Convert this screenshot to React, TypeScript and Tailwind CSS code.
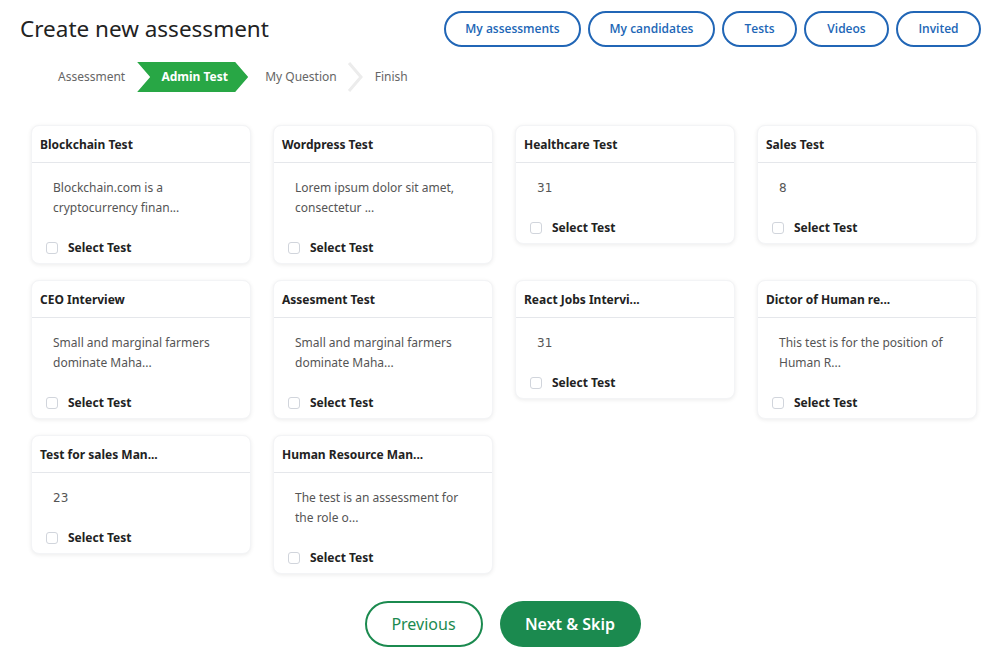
import { useState } from "react";

type Test = { title: string; body: string; numeric?: boolean };

const tests: Test[] = [
  { title: "Blockchain Test", body: "Blockchain.com is a cryptocurrency finan..." },
  { title: "Wordpress Test", body: "Lorem ipsum dolor sit amet, consectetur ..." },
  { title: "Healthcare Test", body: "31", numeric: true },
  { title: "Sales Test", body: "8", numeric: true },
  { title: "CEO Interview", body: "Small and marginal farmers dominate Maha..." },
  { title: "Assesment Test", body: "Small and marginal farmers dominate Maha..." },
  { title: "React Jobs Intervi...", body: "31", numeric: true },
  { title: "Dictor of Human re...", body: "This test is for the position of Human R..." },
  { title: "Test for sales Man...", body: "23", numeric: true },
  { title: "Human Resource Man...", body: "The test is an assessment for the role o..." },
];

const navLinks = [
  { label: "My assessments", width: "w-[137px]" },
  { label: "My candidates", width: "w-[127px]" },
  { label: "Tests", width: "w-[75px]" },
  { label: "Videos", width: "w-[85px]" },
  { label: "Invited", width: "w-[85px]" },
];

function TestCard({ test }: { test: Test }) {
  const [checked, setChecked] = useState(false);
  return (
    <div className="rounded-lg border border-gray-100 bg-white shadow-[0_1px_4px_rgba(0,0,0,0.08)]">
      <div className="flex h-[37px] items-center border-b border-gray-200 px-2 pt-[2px] text-[12px] font-bold text-[#222]">
        {test.title}
      </div>
      <div className="pl-[21px] pr-6 pt-[15px] text-[12px] leading-5 text-[#555]">
        {test.numeric ? (
          <span className="font-['DejaVu_Sans',sans-serif] text-[12px] text-[#555]">{test.body}</span>
        ) : (
          <p>{test.body}</p>
        )}
      </div>
      <label className="flex cursor-pointer items-center gap-[10px] px-[14px] pb-[6px] pt-[21px]">
        <input
          type="checkbox"
          checked={checked}
          onChange={() => setChecked(!checked)}
          className="h-3 w-3 appearance-none rounded-[3px] border border-gray-300 bg-white checked:bg-[#27a24c]"
        />
        <span className="text-[12px] font-bold text-[#222]">Select Test</span>
      </label>
    </div>
  );
}

export default function App() {
  return (
    <div className="min-h-[669px] w-[1000px] bg-white font-['Noto_Sans',sans-serif]">
      <header className="flex items-start justify-between pl-5 pr-[19px] pt-[11px]">
        <h1 className="mt-[2px] text-[22.5px] leading-8 text-[#222]">Create new assessment</h1>
        <nav className="flex gap-[7px]">
          {navLinks.map((l) => (
            <button
              key={l.label}
              className={`h-9 rounded-full border-2 border-[#2166b6] font-['Open_Sans',sans-serif] text-[12px] font-semibold text-[#2166b6] ${l.width}`}
            >
              {l.label}
            </button>
          ))}
        </nav>
      </header>

      <div className="ml-[58px] mt-[15px] flex h-[30px] items-center text-[12px]">
        <span className="text-[#666]">Assessment</span>
        <div className="ml-[12px] flex h-[30px] w-[111px] items-center justify-center bg-[#28a745] pl-1 font-bold text-white [clip-path:polygon(0_0,calc(100%-13px)_0,100%_50%,calc(100%-13px)_100%,0_100%,13px_50%)]">
          Admin Test
        </div>
        <span className="ml-[17px] text-[#666]">My Question</span>
        <svg width="16" height="30" viewBox="0 0 16 30" className="ml-[10px]">
          <path d="M2 1 L14 15 L2 29" fill="none" stroke="#ececec" strokeWidth="3" />
        </svg>
        <span className="ml-[12px] text-[#666]">Finish</span>
      </div>

      <main className="mt-[33px] grid grid-cols-4 items-start gap-x-[22px] gap-y-4 pl-[31px] pr-[23px]">
        {tests.map((t) => (
          <TestCard key={t.title} test={t} />
        ))}
      </main>

      <div className="mt-[27px] flex justify-center gap-[17px] pb-5 pl-[5px]">
        <button className="h-[46px] w-[118px] rounded-full border-2 border-[#1b8a4f] text-[16px] text-[#1b8a4f]">
          Previous
        </button>
        <button className="h-[46px] w-[141px] rounded-full bg-[#1b8a4f] text-[16px] font-semibold text-white">
          Next &amp; Skip
        </button>
      </div>
    </div>
  );
}
